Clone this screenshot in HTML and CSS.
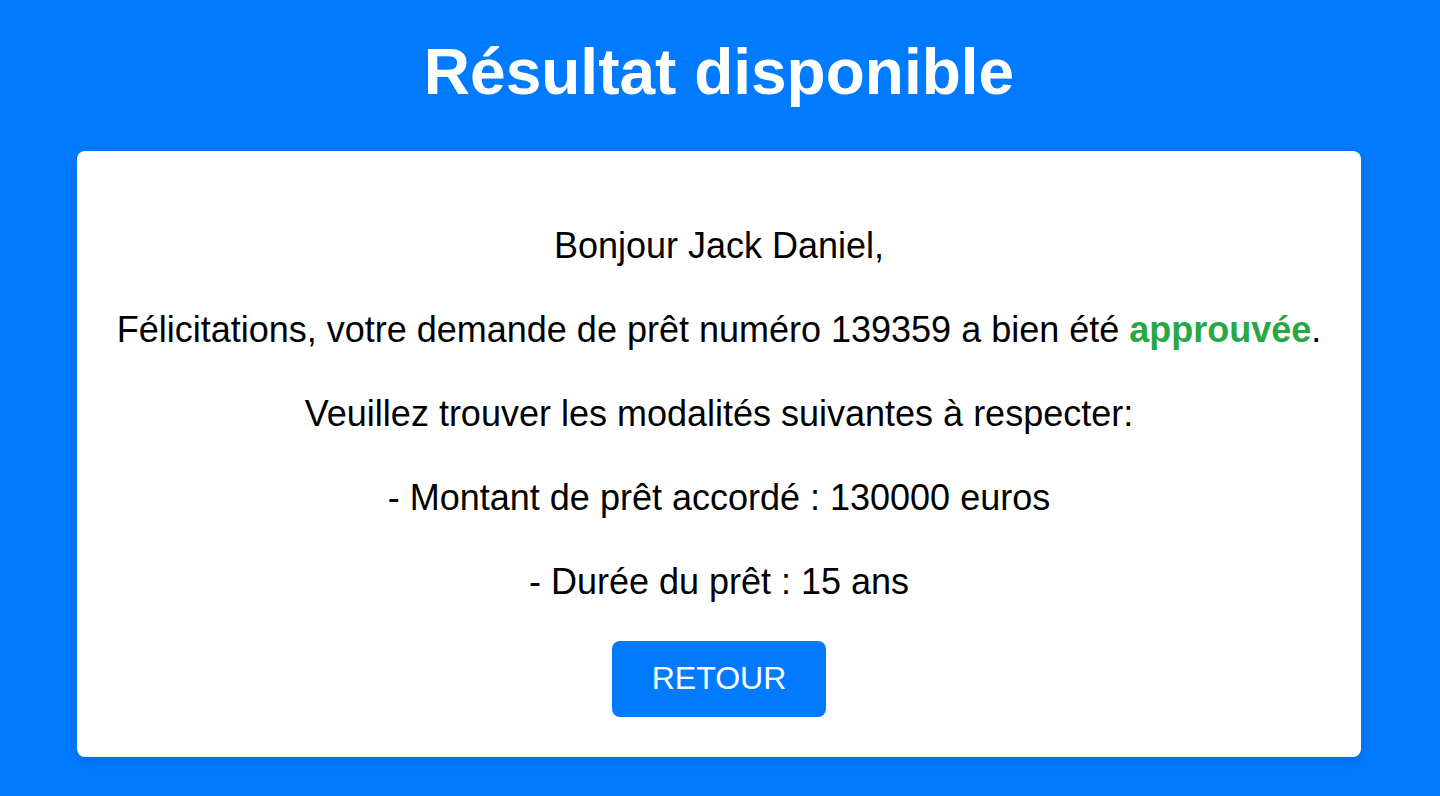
FILE: index.html
```html
<!DOCTYPE html>
<html lang="fr">
<head>
<meta charset="utf-8">
<title>Résultat disponible</title>
<link rel="stylesheet" href="styles.css">
</head>
<body>
<main class="page">
  <h1 class="title">Résultat disponible</h1>
  <section class="card">
    <p class="line">Bonjour Jack Daniel,</p>
    <p class="line">Félicitations, votre demande de prêt numéro 139359 a bien été <strong class="ok">approuvée</strong>.</p>
    <p class="line">Veuillez trouver les modalités suivantes à respecter:</p>
    <p class="line">- Montant de prêt accordé : 130000 euros</p>
    <p class="line">- Durée du prêt : 15 ans</p>
    <button class="btn" type="button">RETOUR</button>
  </section>
</main>
</body>
</html>
```

FILE: styles.css
```css
html, body {
  margin: 0;
  padding: 0;
  background: #007bff;
  font-family: "Liberation Sans", Arial, sans-serif;
}
.page {
  display: flex;
  flex-direction: column;
  align-items: stretch;
  padding: 36px 79px 0 77px;
  min-height: 796px;
  box-sizing: border-box;
}
.title {
  margin: 0 0 41px;
  text-align: center;
  color: #fff;
  font-size: 64px;
  font-weight: 700;
  line-height: 1.15;
}
.card {
  background: #fff;
  border-radius: 8px;
  box-shadow: 0 4px 12px rgba(0, 0, 0, 0.12);
  padding: 37px 16px 40px;
  display: flex;
  flex-direction: column;
  align-items: center;
  text-align: center;
}
.line {
  margin: 32px 0 0;
  font-size: 36px;
  line-height: 52px;
  color: #000;
}
.ok {
  color: #28a745;
  font-weight: 700;
}
.btn {
  margin-top: 33px;
  width: 214px;
  height: 76px;
  border: none;
  border-radius: 8px;
  background: #007bff;
  color: #fff;
  font-family: "Liberation Sans", Arial, sans-serif;
  font-size: 32px;
  cursor: pointer;
}
```
